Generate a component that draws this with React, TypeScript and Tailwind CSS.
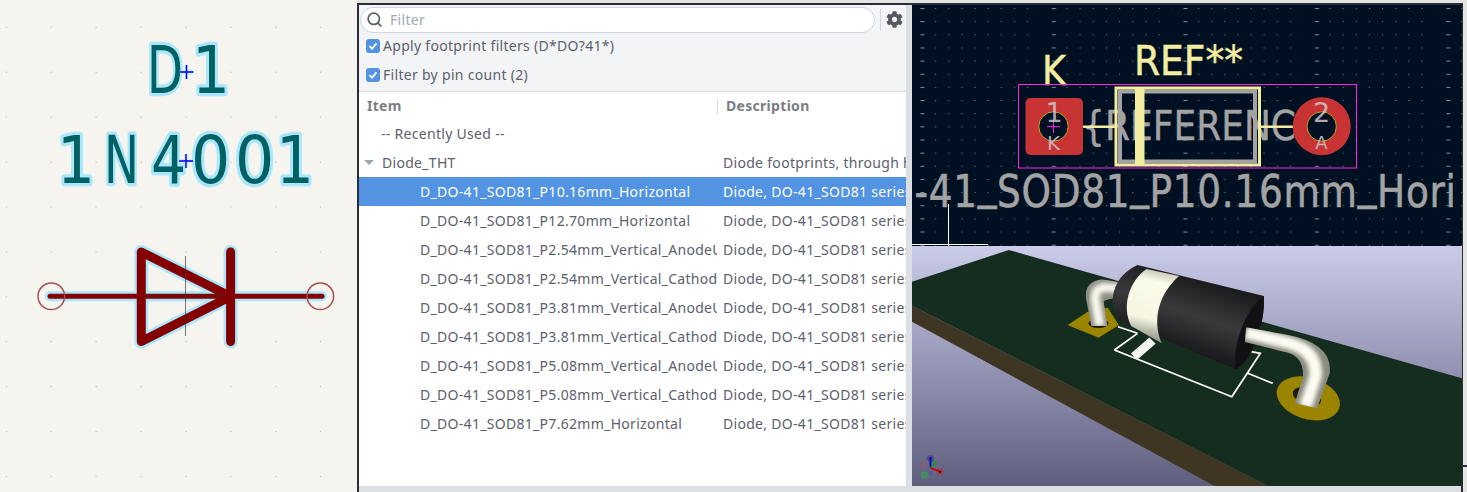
import { Search } from "lucide-react";
import { FaCog } from "react-icons/fa";

const footprints = [
  ["D_DO-41_SOD81_P10.16mm_Horizontal", "Diode, DO-41_SOD81 series, Axial, Horizontal, pin pitch=10.16mm"],
  ["D_DO-41_SOD81_P12.70mm_Horizontal", "Diode, DO-41_SOD81 series, Axial, Horizontal, pin pitch=12.7mm"],
  ["D_DO-41_SOD81_P2.54mm_Vertical_AnodeUp", "Diode, DO-41_SOD81 series, Axial, Vertical, pin pitch=2.54mm"],
  ["D_DO-41_SOD81_P2.54mm_Vertical_CathodeUp", "Diode, DO-41_SOD81 series, Axial, Vertical, pin pitch=2.54mm"],
  ["D_DO-41_SOD81_P3.81mm_Vertical_AnodeUp", "Diode, DO-41_SOD81 series, Axial, Vertical, pin pitch=3.81mm"],
  ["D_DO-41_SOD81_P3.81mm_Vertical_CathodeUp", "Diode, DO-41_SOD81 series, Axial, Vertical, pin pitch=3.81mm"],
  ["D_DO-41_SOD81_P5.08mm_Vertical_AnodeUp", "Diode, DO-41_SOD81 series, Axial, Vertical, pin pitch=5.08mm"],
  ["D_DO-41_SOD81_P5.08mm_Vertical_CathodeUp", "Diode, DO-41_SOD81 series, Axial, Vertical, pin pitch=5.08mm"],
  ["D_DO-41_SOD81_P7.62mm_Horizontal", "Diode, DO-41_SOD81 series, Axial, Horizontal, pin pitch=7.62mm"],
];

function SchLetters({ glyphs, y }: { glyphs: [string, number, number][]; y: number }) {
  const draw = (stroke: string, width: number, fill: string) =>
    glyphs.map(([ch, x, sx], i) => (
      <text
        key={i}
        transform={`translate(${x} ${y}) scale(${sx} 1)`}
        fontFamily="DejaVu Sans, sans-serif"
        fontSize="65"
        fill={fill}
        stroke={stroke}
        strokeWidth={width}
        strokeLinejoin="round"
      >
        {ch}
      </text>
    ));
  return (
    <g>
      {draw("#ace6fb", 6.5, "#ace6fb")}
      {draw("#006165", 0, "#006165")}
    </g>
  );
}

function Crosshair({ x, y }: { x: number; y: number }) {
  return (
    <g>
      <path d={`M${x - 7} ${y}H${x + 7}M${x} ${y - 7}V${y + 7}`} stroke="#ace6fb" strokeWidth="3" />
      <path d={`M${x - 7} ${y}H${x + 7}M${x} ${y - 7}V${y + 7}`} stroke="#0000f0" strokeWidth="1.4" />
    </g>
  );
}

function Schematic() {
  const body = "M141.3 252V341.6L230.5 296.5ZM230.6 252V341.6";
  return (
    <svg width="357" height="492" viewBox="0 0 357 492" className="block shrink-0">
      <defs>
        <pattern id="schgrid" x="5.8" y="26.8" width="44.9" height="44.9" patternUnits="userSpaceOnUse">
          <rect width="1.1" height="1.1" fill="#b0b0aa" />
        </pattern>
      </defs>
      <rect width="357" height="492" fill="#f5f4ef" />
      <rect width="357" height="492" fill="url(#schgrid)" />
      <SchLetters glyphs={[["D", 147, 0.72], ["1", 192, 0.92]]} y={93} />
      <SchLetters glyphs={[["1", 57, 0.92], ["N", 104, 0.72], ["4", 151, 0.85], ["0", 191, 0.95], ["0", 235, 0.95], ["1", 276, 0.92]]} y={183} />
      <Crosshair x={186.5} y={72} />
      <Crosshair x={186} y={161} />
      <path d="M50 296.3H322" stroke="#ace6fb" strokeWidth="10" strokeLinecap="round" />
      <path d={body} fill="none" stroke="#ace6fb" strokeWidth="14" strokeLinejoin="round" strokeLinecap="round" />
      <path d="M147 296.3H222" stroke="#ace6fb" strokeWidth="10" />
      <path d={body} fill="none" stroke="#840000" strokeWidth="9" strokeLinejoin="round" strokeLinecap="round" />
      <path d="M50 296.3H322" stroke="#840000" strokeWidth="5" strokeLinecap="round" />
      <path d="M185.5 256V336M141 296H226" stroke="#333" strokeOpacity="0.65" strokeWidth="1" />
      <circle cx="51.3" cy="296.3" r="13.3" fill="none" stroke="#a84f4f" strokeWidth="1.5" />
      <circle cx="320.3" cy="296.3" r="13.3" fill="none" stroke="#a84f4f" strokeWidth="1.5" />
    </svg>
  );
}

function Checkbox({ label }: { label: string }) {
  return (
    <label className="flex items-center h-[29px] pl-[7px] gap-[3px]">
      <span className="flex items-center justify-center w-[14px] h-[14px] rounded-[3px] bg-[#5294e2]">
        <svg width="10" height="10" viewBox="0 0 10 10">
          <path d="M1.5 5.2L4 7.6L8.5 2.4" fill="none" stroke="#fff" strokeWidth="1.8" />
        </svg>
      </span>
      <span>{label}</span>
    </label>
  );
}

function Row({ item, desc, indent, selected, arrow }: { item: string; desc?: string; indent: string; selected?: boolean; arrow?: boolean }) {
  return (
    <div className={`relative flex items-center h-[29px] whitespace-nowrap ${selected ? "bg-[#5294e2] text-white" : ""}`}>
      {arrow && <span className="absolute left-[5px] top-[12px] w-0 h-0 border-x-[5px] border-x-transparent border-t-[5px] border-t-[#a0a3aa]" />}
      <div className={`w-[358px] shrink-0 overflow-hidden ${indent}`}>{item}</div>
      <div className="flex-1 overflow-hidden pl-[6px]">{desc}</div>
    </div>
  );
}

function FootprintList() {
  return (
    <div className="flex flex-col w-[553px] h-full shrink-0 bg-[#f3f4f6] border-r-[6px] border-r-[#dce0e3] text-[#5c616c] text-[14px] tracking-[0.3px] font-['Noto_Sans',sans-serif]">
      <div className="flex items-center h-[28px] pt-[1px] pl-[1px]">
        <div className="flex items-center gap-[7px] w-[515px] h-[26px] pl-[5px] bg-white border border-[#cdd5e6] rounded-l-[13px] rounded-r-[13px] text-[#a4a7ad]">
          <Search size={17} strokeWidth={2.5} className="text-[#5c616c]" />
          <span>Filter</span>
        </div>
        <div className="w-px h-[22px] ml-[5px] bg-[#cfd3da]" />
        <FaCog size={17} className="ml-[5px] text-[#55585f]" />
      </div>
      <div className="flex flex-col h-[58px] -mt-[2px]">
        <Checkbox label="Apply footprint filters (D*DO?41*)" />
        <Checkbox label="Filter by pin count (2)" />
      </div>
      <div className="flex-1 flex flex-col mt-[2px] bg-white border-t border-t-[#d8dbe0] overflow-hidden">
        <div className="flex items-center h-[27px] shrink-0 font-bold text-[#7b7e85]">
          <div className="w-[359px] pl-[8px] border-r border-r-[#d8dbe0] leading-[16px]">Item</div>
          <div className="pl-[8px]">Description</div>
        </div>
        <Row item="-- Recently Used --" indent="pl-[22px]" />
        <Row item="Diode_THT" desc="Diode footprints, through hole" indent="pl-[23px]" arrow />
        {footprints.map(([item, desc], i) => (
          <Row key={item} item={item} desc={desc} indent="pl-[61px]" selected={i === 0} />
        ))}
      </div>
    </div>
  );
}

function PcbView() {
  const fab = "#a3a3a3";
  const silk = "#f2eda1";
  return (
    <svg width="550" height="241" viewBox="912 5 550 241" className="block">
      <defs>
        <pattern id="pcbgrid" x="908.9" y="8" width="131.5" height="13.15" patternUnits="userSpaceOnUse">
          <rect x="11.5" y="0" width="4" height="1" fill="#8d949c" />
          {[1, 2, 3, 4, 5, 6, 7, 8, 9].map((k) => (
            <rect key={k} x={13 + k * 13.15} y="0" width="1" height="1" fill="#8d949c" />
          ))}
        </pattern>
        <clipPath id="pcbtext">
          <rect x="912" y="170" width="541" height="45" />
        </clipPath>
      </defs>
      <rect x="912" y="5" width="550" height="241" fill="#001023" />
      <rect x="912" y="5" width="550" height="241" fill="url(#pcbgrid)" />

      <g fontFamily="DejaVu Sans, sans-serif">
        <g clipPath="url(#pcbtext)">
          <text transform="translate(914.5 207) scale(0.85 1)" fontSize="44" fill={fab} stroke={fab} strokeWidth="0.6" textLength="661" lengthAdjust="spacing">
            -41<tspan dy="-9">_</tspan>
            <tspan dy="9">SOD81</tspan>
            <tspan dy="-9">_</tspan>
            <tspan dy="9">P10.16mm</tspan>
            <tspan dy="-9">_</tspan>
            <tspan dy="9">Horiz</tspan>
          </text>
        </g>
        <text x="1082" y="140" fontSize="41" fill={fab} stroke={fab} strokeWidth="0.4" textLength="214" lengthAdjust="spacingAndGlyphs">
          {"{REFERENC"}
        </text>
        <text x="1134" y="75" fontSize="41" fill={silk} stroke={silk} strokeWidth="0.5" textLength="109" lengthAdjust="spacingAndGlyphs">
          REF**
        </text>
        <text x="1042" y="85" fontSize="41" fill={silk} stroke={silk} strokeWidth="0.5" textLength="24" lengthAdjust="spacingAndGlyphs">
          K
        </text>
      </g>

      <path d="M1083 126.7H1116M1258 126.7H1293" stroke={silk} strokeWidth="2.5" />
      <rect x="1120" y="91.5" width="135" height="70" fill="none" stroke={fab} strokeWidth="4" />
      <rect x="1116" y="88" width="143.5" height="77" fill="none" stroke={silk} strokeWidth="3" />
      <rect x="1135" y="87" width="9.5" height="79" fill={silk} />
      <rect x="1018.5" y="84.5" width="338" height="83.5" fill="none" stroke="#ff26e2" strokeWidth="1" />

      <rect x="1025.5" y="98" width="57.5" height="57" rx="5" fill="#c83434" />
      <circle cx="1321.7" cy="126.3" r="29" fill="#c83434" />
      <circle cx="1053.5" cy="126.5" r="14.7" fill="#001023" stroke="#c9a227" strokeWidth="1" />
      <circle cx="1321.7" cy="126.5" r="14.7" fill="#001023" stroke="#c9a227" strokeWidth="1" />
      <path d="M1047 126.7H1060M1053.5 120V133" stroke="#ff26e2" strokeWidth="1" />

      <g fontFamily="DejaVu Sans, sans-serif" fill="#cfc6cb" fillOpacity="0.85" textAnchor="middle">
        <text x="1054" y="122" fontSize="27">1</text>
        <text x="1053.5" y="150" fontSize="20">K</text>
        <text x="1321.5" y="122" fontSize="27">2</text>
        <text x="1321.5" y="149" fontSize="18">A</text>
      </g>

      <path d="M948.5 204V246M912 244.5H988" stroke="#fff" strokeWidth="1" />
    </svg>
  );
}

function View3D() {
  return (
    <svg width="550" height="240" viewBox="6 18 1546 720" preserveAspectRatio="none" className="block">
      <defs>
        <linearGradient id="sky" x1="0" y1="0" x2="0" y2="1">
          <stop offset="0" stopColor="#cbcce9" />
          <stop offset="1" stopColor="#5e5e7f" />
        </linearGradient>
        <linearGradient id="black" gradientUnits="userSpaceOnUse" x1="830" y1="120" x2="750" y2="350">
          <stop offset="0" stopColor="#1b1b1d" />
          <stop offset="0.45" stopColor="#3a3a3c" />
          <stop offset="1" stopColor="#121214" />
        </linearGradient>
        <linearGradient id="band" gradientUnits="userSpaceOnUse" x1="690" y1="90" x2="640" y2="310">
          <stop offset="0" stopColor="#c9c9b6" />
          <stop offset="0.15" stopColor="#fbfbe9" />
          <stop offset="0.65" stopColor="#f5f5e2" />
          <stop offset="1" stopColor="#77776b" />
        </linearGradient>
        <filter id="soft" x="-20%" y="-20%" width="140%" height="140%">
          <feGaussianBlur stdDeviation="6" />
        </filter>
        <clipPath id="leadR">
          <path d="M945 262L1060 284Q1190 310 1180 400L1145 505L1082 490L1105 410Q1108 345 1050 335L942 306Z" />
        </clipPath>
        <clipPath id="leadL">
          <path d="M600 128L540 118Q490 125 495 175L510 258L555 258L545 185Q545 178 600 172Z" />
        </clipPath>
      </defs>
      <rect x="6" y="18" width="1546" height="720" fill="url(#sky)" />
      <polygon points="6,197 6,245 860,740 1012,740" fill="#3f3523" />
      <polygon points="6,125 278,30 1552,415 1552,740 1012,740 6,197" fill="#152d1f" />

      <path d="M447 255L500 218L555 205L585 255L530 291Z" fill="#9a8400" strokeLinejoin="round" stroke="#9a8400" strokeWidth="4" />
      <ellipse cx="530" cy="250" rx="28" ry="14" fill="#20200f" />
      <ellipse cx="1120" cy="475" rx="92" ry="62" transform="rotate(20 1120 475)" fill="#9a8400" />
      <ellipse cx="1116" cy="470" rx="42" ry="25" transform="rotate(25 1116 470)" fill="#1e1e0f" />

      <path d="M585 260L640 280M575 330L640 280M575 330L905 470L985 340L960 335M950 400L1020 430" fill="none" stroke="#fff" strokeWidth="5" />
      <path d="M630 350L682 302" fill="none" stroke="#f4f4ee" strokeWidth="26" />

      {/* left lead */}
      <g clipPath="url(#leadL)">
        <rect x="480" y="110" width="130" height="160" fill="#8f8f84" />
        <path d="M600 146L548 142Q515 145 522 185L534 258" fill="none" stroke="#f7f7ee" strokeWidth="26" filter="url(#soft)" />
      </g>

      {/* body */}
      <path d="M640 75L995 168C1000 250 960 370 915 387L600 248C555 220 555 115 640 75Z" fill="url(#black)" />
      <path d="M665 87L757 108C700 160 680 240 708 310L622 258C595 200 615 125 665 87Z" fill="url(#band)" />
      <path d="M995 168C1000 250 960 370 915 387C905 330 940 205 995 168Z" fill="#111113" />

      {/* right lead */}
      <g clipPath="url(#leadR)">
        <rect x="930" y="250" width="270" height="270" fill="#8a8a7f" />
        <path d="M945 278L1060 308Q1146 330 1140 410L1112 500" fill="none" stroke="#fbfbf2" strokeWidth="36" filter="url(#soft)" />
      </g>

      {/* axes */}
      <circle cx="58" cy="655" r="10" fill="#3a3aa8" fillOpacity="0.7" />
      <circle cx="85" cy="695" r="10" fill="#b0343f" fillOpacity="0.7" />
      <circle cx="70" cy="670" r="6" fill="#2a8a3a" />
      <circle cx="40" cy="675" r="8" fill="#8a5c70" />
      <circle cx="41" cy="705" r="11" fill="#4a8a62" />
      <circle cx="58" cy="700" r="7" fill="#555a96" />
      <path d="M58 683V655" stroke="#0000c8" strokeWidth="5" />
      <path d="M58 683L85 695" stroke="#d00000" strokeWidth="5" />
      <path d="M58 683L70 670" stroke="#00a800" strokeWidth="4" />
      <circle cx="58" cy="655" r="3" fill="#000" />
      <circle cx="85" cy="695" r="3" fill="#000" />
    </svg>
  );
}

export default function App() {
  return (
    <div className="flex w-[1467px] h-[492px] overflow-hidden bg-[#f5f4ef]">
      <Schematic />
      <div className="relative flex-1 pt-[3px] bg-[#e4e4e0]">
        <div className="flex flex-col w-[1106px] h-[489px] border-x-2 border-t-2 border-x-[#2b2d38] border-t-[#2b2d38] bg-[#dce0e3]">
          <div className="flex h-[481px]">
            <FootprintList />
            <div className="flex flex-col">
              <PcbView />
              <View3D />
            </div>
          </div>
        </div>
        <div className="absolute right-0 top-[465px] w-[4px] h-[2px] bg-[#2b2d38]" />
      </div>
    </div>
  );
}
